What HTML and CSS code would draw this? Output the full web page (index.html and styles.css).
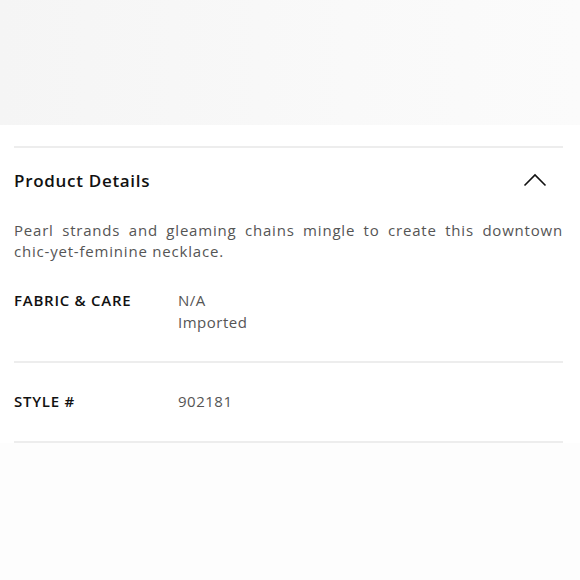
FILE: index.html
```html
<!DOCTYPE html>
<html>
<head>
<meta charset="utf-8">
<link rel="stylesheet" href="styles.css">
</head>
<body>
<div class="top-band"></div>
<section class="details">
  <div class="header">
    <h2 class="title">Product Details</h2>
    <svg class="chevron" width="24" height="14" viewBox="0 0 24 14"><path d="M1.5 12.5 L12 2 L22.5 12.5" fill="none" stroke="#111" stroke-width="1.6"/></svg>
  </div>
  <p class="desc">Pearl strands and gleaming chains mingle to create this downtown chic-yet-feminine necklace.</p>
  <div class="spec first">
    <div class="label">FABRIC &amp; CARE</div>
    <div class="value">N/A<br>Imported</div>
  </div>
  <div class="spec">
    <div class="label">STYLE #</div>
    <div class="value">902181</div>
  </div>
</section>
<div class="bottom-band"></div>
</body>
</html>
```
FILE: styles.css
```css
html, body { margin: 0; padding: 0; background: #fff; }
body { font-family: "Open Sans", "Noto Sans", sans-serif; color: #111; width: 580px; height: 580px; overflow: hidden; }
.top-band { height: 125px; background: linear-gradient(90deg, #f5f5f5, #f9f9f9 60%, #fbfbfb); }
.details { margin: 21px 17px 0 14px; border-top: 2px solid #ededed; }
.header { display: flex; justify-content: space-between; align-items: center; padding-top: 21px; height: 24px; }
.title { margin: 0; font-size: 17px; font-weight: 600; line-height: 24px; letter-spacing: 0.7px; }
.chevron { margin-right: 16px; margin-top: -2px; }
.desc { margin: 27px 0 0; font-size: 15px; line-height: 21px; color: #555; text-align: justify; letter-spacing: 0.8px; }
.spec { display: grid; grid-template-columns: 164px 1fr; padding: 27px 0 29px; border-bottom: 2px solid #ededed; font-size: 15px; line-height: 22px; }
.spec.first { padding-top: 27px; padding-bottom: 28px; }
.label { font-weight: 600; color: #111; letter-spacing: 0.75px; }
.value { color: #555; letter-spacing: 0.5px; }
.bottom-band { height: 140px; margin-top: 0; background: #fdfdfd; }
```
